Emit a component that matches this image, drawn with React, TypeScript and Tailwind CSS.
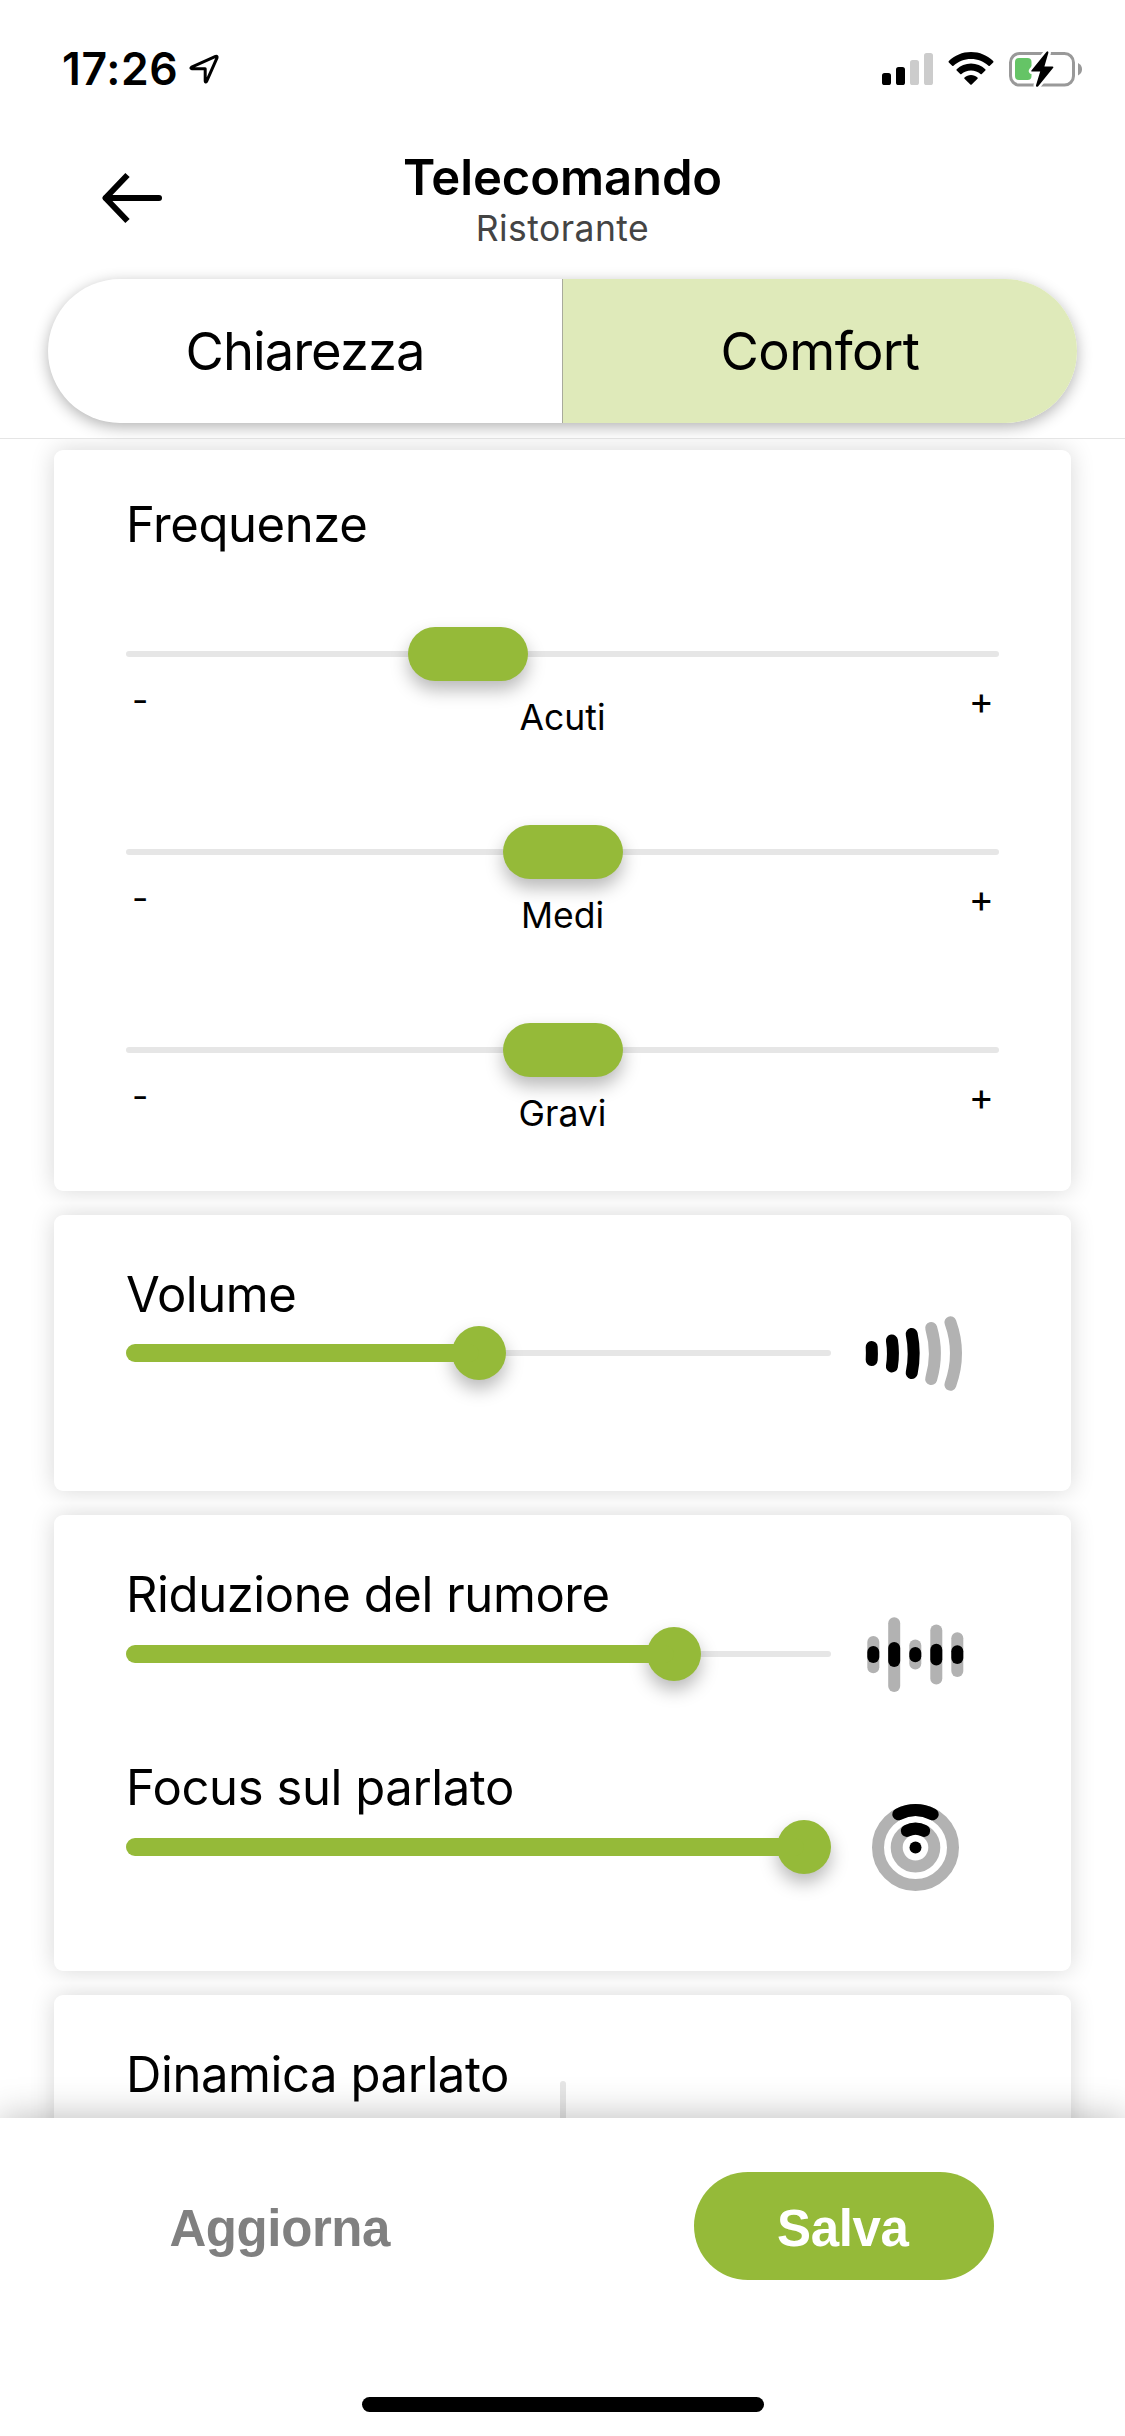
import type { ReactNode } from "react";

function StatusBar() {
  return (
    <div className="flex h-[132px] items-start justify-between pr-[42px] pl-[62px]">
      <div className="flex">
        <span className="mt-[45px] w-[127px] text-[44.5px] leading-[48px] font-semibold tracking-[0.6px]">
          17:26
        </span>
        <svg className="mt-[53px]" width="31" height="32" viewBox="0 0 31 32" fill="none">
          <path
            d="M2.6 14.2 L26.6 3.4 Q28.6 2.8 28 4.8 L17.6 28.4 Q16.4 30 16.2 28 V15.8 H3 Q1 15.4 2.6 14.2 Z"
            stroke="#000"
            strokeWidth="3"
            strokeLinejoin="round"
          />
        </svg>
      </div>

      <div className="mt-[51px] flex">
        <svg width="52" height="36" viewBox="0 0 52 36">
          <rect x="0" y="22" width="9" height="12" rx="2.6" />
          <rect x="14" y="16" width="9" height="18" rx="2.6" />
          <rect x="28" y="9" width="9" height="25" rx="2.6" fill="#ccc" />
          <rect x="42" y="2" width="9" height="32" rx="2.6" fill="#ccc" />
        </svg>
        <svg className="ml-[14px]" width="46" height="36" viewBox="0 0 46 36">
          <path d="M23 1 C31.6 1 39.4 4.4 45.2 10 Q45.8 10.7 45.2 11.4 L41.8 14.8 Q41.2 15.4 40.5 14.8 C35.9 10.5 29.8 7.9 23 7.9 S10.1 10.5 5.5 14.8 Q4.8 15.4 4.2 14.8 L0.8 11.4 Q0.2 10.7 0.8 10 C6.6 4.4 14.4 1 23 1 Z" />
          <path d="M23 12.6 C28.5 12.6 33.5 14.7 37.3 18.2 Q38 18.9 37.3 19.6 L33.8 23 Q33.2 23.6 32.5 23 C30 20.8 26.7 19.5 23 19.5 S16 20.8 13.5 23 Q12.8 23.6 12.2 23 L8.7 19.6 Q8 18.9 8.7 18.2 C12.5 14.7 17.5 12.6 23 12.6 Z" />
          <path d="M23 24 C25.5 24 27.7 24.9 29.5 26.4 Q30.1 27 29.5 27.7 L23.7 33.5 Q23 34.1 22.3 33.5 L16.5 27.7 Q15.9 27 16.5 26.4 C18.3 24.9 20.5 24 23 24 Z" />
        </svg>
        <svg className="ml-[15px]" width="74" height="38" viewBox="0 0 74 38">
          <rect x="1.5" y="2.5" width="63" height="31.5" rx="9" fill="none" stroke="#999" strokeWidth="3" />
          <path d="M69 12 Q73 14 73 18.2 Q73 22.4 69 24.4 Z" fill="#999" />
          <rect x="6" y="7" width="16.5" height="22" rx="4" fill="#65c466" />
          <path
            d="M37.6 0.8 L22.6 19.2 Q21.6 20.6 23.2 20.6 H31.2 L27 34.2 Q26.8 36.6 29 35.4 L44 17 Q45 15.6 43.4 15.6 H35.4 L39.4 1.8 Q39.4 -0.6 37.6 0.8 Z"
            stroke="#fff"
            strokeWidth="5"
            paintOrder="stroke"
          />
        </svg>
      </div>
    </div>
  );
}

function Header() {
  return (
    <header className="relative z-10 h-[439px] border-b border-[#e5e5e5]">
      <StatusBar />

      <div className="grid h-[147px] grid-cols-[1fr_auto_1fr]">
        <svg className="mt-[38px] ml-[101px]" width="64" height="56" viewBox="0 0 64 56" fill="none">
          <path d="M5 28 H58" stroke="#000" strokeWidth="6" strokeLinecap="round" />
          <path d="M26.5 5 L4.5 28 L26.5 51" stroke="#000" strokeWidth="6" strokeLinejoin="round" />
        </svg>
        <div className="pt-[16px] text-center">
          <h1 className="text-[49px] leading-[60px] font-semibold tracking-[-0.1px]">Telecomando</h1>
          <p className="mt-px text-[35.5px] leading-[40px] tracking-[0.45px] text-[#444]">Ristorante</p>
        </div>
      </div>

      <div className="mx-[48px] flex h-[144px] overflow-hidden rounded-full bg-white text-[52.5px] shadow-[0_4px_15px_rgba(0,0,0,0.3)]">
        <button className="w-[514px] tracking-[-1px]">Chiarezza</button>
        <button className="flex-1 border-l border-[#a8aa9c] bg-[#dfeaba] tracking-[-0.6px]">Comfort</button>
      </div>
    </header>
  );
}

function Card({ className, children }: { className: string; children: ReactNode }) {
  return (
    <div className="shrink-0 overflow-hidden bg-white px-[54px] py-3">
      <section className={`rounded-[9px] bg-white px-[72px] shadow-[0_0_24px_rgba(0,0,0,0.16)] ${className}`}>
        {children}
      </section>
    </div>
  );
}

function Title({ children }: { children: ReactNode }) {
  return <h2 className="text-[49px] leading-[60px] tracking-[-0.42px] whitespace-nowrap">{children}</h2>;
}

function BandSlider({ label, left }: { label: string; left: number }) {
  return (
    <div className="h-[198px]">
      <div className="relative flex h-[54px] items-center">
        <div className="h-[6px] w-full rounded-full bg-[#e6e6e6]" />
        <div
          className="absolute top-0 h-[54px] w-[120px] rounded-full bg-[#95ba39] shadow-[0_9px_18px_rgba(0,0,0,0.28)]"
          style={{ left }}
        />
      </div>
      <div className="grid grid-cols-[1fr_auto_1fr] px-[6px] text-[35.5px] leading-[40px]">
        <span>-</span>
        <span className="mt-[17px]">{label}</span>
        <span className="-mt-px -mr-px text-right text-[38px]">+</span>
      </div>
    </div>
  );
}

function LevelSlider({ value, icon }: { value: number; icon: ReactNode }) {
  // the thumb is 54px wide and stays inside the 705px track
  const left = value * (705 - 54);
  return (
    <div className="flex h-[54px] items-center">
      <div className="relative flex h-[54px] w-[705px] items-center">
        <div className="h-[6px] w-full rounded-full bg-[#e6e6e6]" />
        <div
          className="absolute top-0 size-[54px] rounded-full bg-[#95ba39] shadow-[0_9px_18px_rgba(0,0,0,0.28)]"
          style={{ left }}
        />
        <div
          className="absolute top-[18px] left-0 h-[18px] rounded-full bg-[#95ba39]"
          style={{ width: left + 27 }}
        />
      </div>
      <div className="ml-[29px] shrink-0">{icon}</div>
    </div>
  );
}

function VolumeIcon() {
  return (
    <svg width="110" height="110" viewBox="0 0 110 110" fill="none" strokeWidth="12" strokeLinecap="round">
      <g stroke="#000">
        <path d="M11.7 49 Q12.1 55.5 11.7 62" />
        <path d="M31.9 42.5 Q34 55.5 31.9 68.5" />
        <path d="M51.7 36 Q55.7 55.5 51.7 75" />
      </g>
      <g stroke="#b2b2b2">
        <path d="M71.2 30 Q78.6 55.5 71.2 81" />
        <path d="M90.4 24.3 Q101.6 55.5 90.4 86.7" />
      </g>
    </svg>
  );
}

const noiseBars = [
  { x: 13.3, outer: 37.3, inner: 17 },
  { x: 34.2, outer: 74.7, inner: 25 },
  { x: 55.3, outer: 30, inner: 15.4 },
  { x: 76.3, outer: 60, inner: 21.7 },
  { x: 97.3, outer: 44.7, inner: 18.7 },
];

function NoiseIcon() {
  return (
    <svg width="110" height="110" viewBox="0 0 110 110">
      {noiseBars.map(({ x, outer, inner }) => (
        <g key={x}>
          <rect x={x - 6} y={55.6 - outer / 2} width="12" height={outer} rx="6" fill="#b2b2b2" />
          <rect x={x - 6} y={55.6 - inner / 2} width="12" height={inner} rx="6" />
        </g>
      ))}
    </svg>
  );
}

function FocusIcon() {
  return (
    <svg width="110" height="110" viewBox="0 0 110 110" fill="none" strokeWidth="12" strokeLinecap="round">
      <circle cx="55.5" cy="55.6" r="37.5" stroke="#b2b2b2" />
      <circle cx="55.5" cy="55.6" r="18.8" stroke="#b2b2b2" />
      <path d="M38.3 22.3 A37.5 37.5 0 0 1 72.7 22.3" stroke="#000" />
      <path d="M46.8 38.9 A18.8 18.8 0 0 1 64.2 38.9" stroke="#000" />
      <circle cx="55.5" cy="55.6" r="6" fill="#000" />
    </svg>
  );
}

export default function App() {
  return (
    <div className="flex h-[2436px] w-[1125px] flex-col overflow-hidden bg-white font-['Inter',sans-serif] text-black">
      <Header />

      <main className="-mt-px flex h-[1680px] shrink-0 flex-col overflow-hidden">
        <Card className="h-[741px] pt-[45px]">
          <Title>Frequenze</Title>
          <div className="mt-[72px]">
            <BandSlider label="Acuti" left={282} />
            <BandSlider label="Medi" left={376.5} />
            <BandSlider label="Gravi" left={376.5} />
          </div>
        </Card>

        <Card className="h-[276px] pt-[50px]">
          <Title>Volume</Title>
          <div className="mt-px">
            <LevelSlider value={0.5} icon={<VolumeIcon />} />
          </div>
        </Card>

        <Card className="flex h-[456px] flex-col gap-[77px] pt-[50px]">
          <div>
            <Title>Riduzione del rumore</Title>
            <div className="mt-[2px]">
              <LevelSlider value={0.8} icon={<NoiseIcon />} />
            </div>
          </div>
          <div>
            <Title>Focus sul parlato</Title>
            <div className="mt-[2px]">
              <LevelSlider value={1} icon={<FocusIcon />} />
            </div>
          </div>
        </Card>

        <Card className="relative h-[276px] pt-[50px]">
          <Title>Dinamica parlato</Title>
          <div className="absolute top-[86px] left-[506px] h-[160px] w-[6px] rounded-full bg-[#e6e6e6]" />
        </Card>
      </main>

      <footer className="relative z-10 flex h-[318px] shrink-0 flex-col items-center bg-white font-['Liberation_Sans',sans-serif] text-[51px] font-bold tracking-[-0.4px] shadow-[0_0_36px_rgba(0,0,0,0.28)]">
        <div className="grid w-full grid-cols-2 justify-items-center pt-[54px]">
          <button className="h-[108px] w-[300px] pt-[6px] pr-[3px] text-[#808080]">Aggiorna</button>
          <button className="h-[108px] w-[300px] rounded-full bg-[#95ba39] pt-[6px] pr-[2px] text-white">Salva</button>
        </div>
        <div className="mt-[117px] h-[15px] w-[402px] rounded-full bg-black" />
      </footer>
    </div>
  );
}
